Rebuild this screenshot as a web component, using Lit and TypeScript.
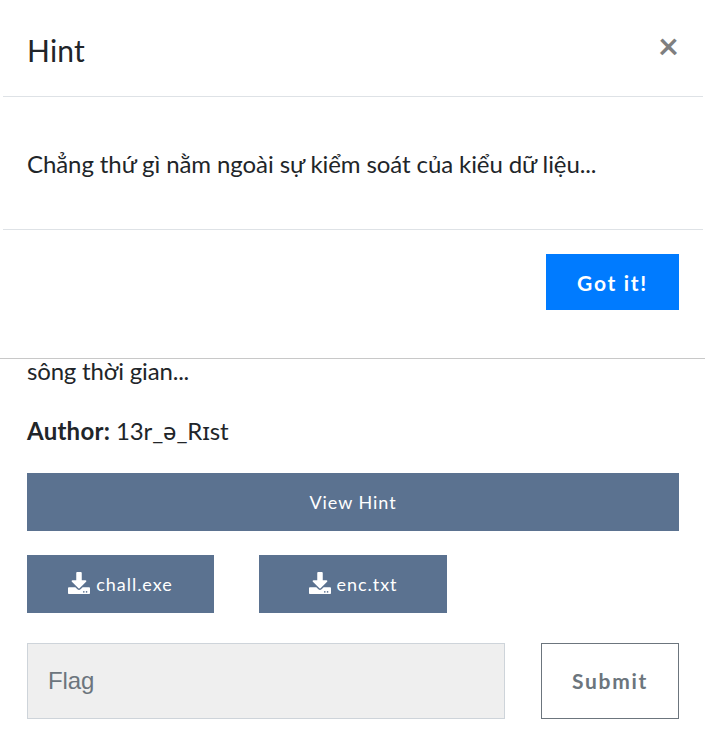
import { LitElement, html, css } from "lit";
import { customElement } from "lit/decorators.js";

const downloadIcon = html`<svg class="icon" viewBox="0 0 512 512" aria-hidden="true"><path fill="currentColor" d="M216 0h80c13.300 0 24 10.700 24 24v168h87.700c17.800 0 26.700 21.500 14.100 34.100L269.700 378.300c-7.500 7.500-19.800 7.500-27.300 0L90.100 226.100c-12.600-12.600-3.700-34.100 14.100-34.100H192V24c0-13.300 10.700-24 24-24zm296 376v112c0 13.300-10.700 24-24 24H24c-13.300 0-24-10.700-24-24V376c0-13.300 10.700-24 24-24h146.700l49 49c20.100 20.100 52.500 20.100 72.600 0l49-49H488c13.300 0 24 10.700 24 24zm-124 88c0-11-9-20-20-20s-20 9-20 20 9 20 20 20 20-9 20-20zm64 0c0-11-9-20-20-20s-20 9-20 20 9 20 20 20 20-9 20-20z"/></svg>`;

@customElement("app-root")
export class AppRoot extends LitElement {
  static styles = css`
    :host { display: block; height: 754px; overflow: hidden; background: #fff; color: #212529; font: 24px/36px Lato, sans-serif; }
    * { box-sizing: border-box; }
    .modal { height: 359px; border-bottom: 1px solid #c8c8c8; padding: 0 2px 0 3px; }
    .head { height: 97px; border-bottom: 1px solid #dee2e6; padding: 28px 24px 0; display: flex; justify-content: space-between; }
    h5 { margin: 0; font-size: 30px; line-height: 45px; font-weight: 400; letter-spacing: 0.200px; }
    .close { border: 0; padding: 0; background: none; height: 34px; font: 700 36px/34px Lato, sans-serif; color: #7f7f7f; }
    .body { height: 133px; border-bottom: 1px solid #dee2e6; padding: 49px 24px 0; letter-spacing: -0.090px; }
    .foot { display: flex; justify-content: flex-end; padding: 24px 24px 0; }
    p { margin: 0; }
    button { border-radius: 0; }
    .got { width: 133px; height: 56px; border: 0; padding: 2px 0 0; background: #007bff; color: #fff; font: 700 21px/30px Lato, sans-serif; letter-spacing: 1.700px; }
    .page { padding: 0 26px 0 27px; }
    .story { line-height: 24px; letter-spacing: -0.180px; }
    .author { height: 36px; margin-top: 30px; letter-spacing: -0.150px; }
    b { letter-spacing: 0.250px; }
    .ipa { font-family: "Noto Sans", sans-serif; line-height: 1; }
    .btn { display: flex; align-items: center; justify-content: center; height: 58px; border: 0; padding: 0; background: #5b7290; color: #fff; font: 400 18px/27px Lato, sans-serif; letter-spacing: 0.950px; }
    .hint { width: 100%; margin-top: 24px; }
    .files { display: flex; gap: 45px; margin-top: 24px; }
    .file { width: 187px; gap: 6px; }
    .file + .file { width: 188px; }
    .icon { width: 22px; height: 22px; margin-top: -3px; }
    .form { display: flex; justify-content: space-between; margin-top: 30px; }
    input { width: 478px; height: 76px; border: 1px solid #ced4da; border-radius: 0; padding: 0 20px; background: #efefef; font: 24px "Liberation Sans", sans-serif; letter-spacing: -0.150px; }
    input::placeholder { color: #6c757d; opacity: 1; }
    .submit { width: 138px; height: 76px; padding: 0; background: #fff; border: 1px solid #6c757d; color: #6c757d; font: 700 21px/30px Lato, sans-serif; letter-spacing: 1.700px; }
  `;

  render() {
    return html`
      <section class="modal" role="dialog">
        <header class="head"><h5>Hint</h5><button class="close" aria-label="Close">×</button></header>
        <div class="body"><p>Chẳng thứ gì nằm ngoài sự kiểm soát của kiểu dữ liệu...</p></div>
        <footer class="foot"><button class="got">Got it!</button></footer>
      </section>
      <main class="page">
        <p class="story">sông thời gian...</p>
        <p class="author"><b>Author:</b> 13r_<span class="ipa">ə</span>_R<span class="ipa">ɪ</span>st</p>
        <button class="btn hint">View Hint</button>
        <div class="files">
          <button class="btn file">${downloadIcon}<span>chall.exe</span></button>
          <button class="btn file">${downloadIcon}<span>enc.txt</span></button>
        </div>
        <form class="form"><input placeholder="Flag" /><button class="submit" type="button">Submit</button></form>
      </main>`;
  }
}
